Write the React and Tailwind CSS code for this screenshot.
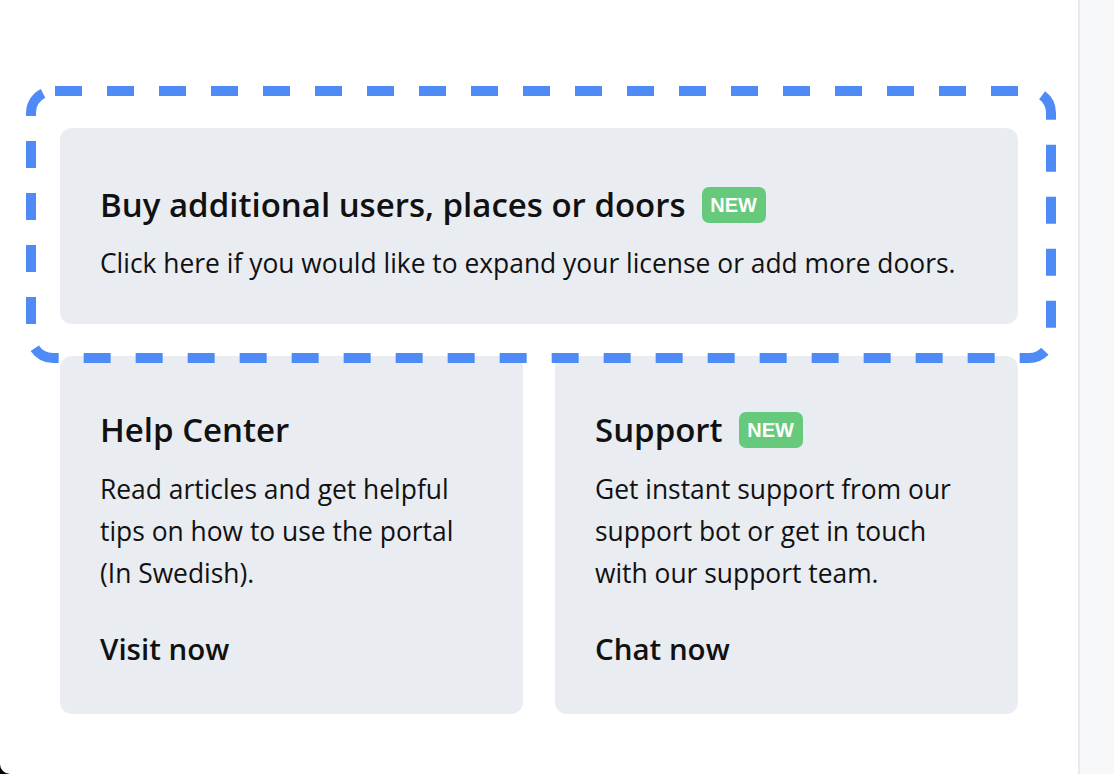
export default function App() {
  return (
    <div className="bg-black w-[1114px] h-[774px] overflow-hidden" style={{ fontFamily: "'Open Sans', Lato, sans-serif" }}>
      <div className="flex h-full bg-white rounded-bl-[10px] overflow-hidden">
        <main className="relative w-[1078px] px-[60px] pt-[128px] text-[#111]">
          {/* dashed highlight drawn over the first card */}
          <svg className="absolute left-0 top-0 pointer-events-none" width="1078" height="400">
            <rect
              x="31"
              y="91"
              width="1020"
              height="267"
              rx="22"
              fill="none"
              stroke="#4f8bf7"
              strokeWidth="10"
              strokeDasharray="27 25"
              strokeDashoffset="-2"
            />
          </svg>

          <div className="h-[196px] bg-[#e9ecf1] rounded-[12px] px-10 pt-[59px]">
            <div className="flex items-center gap-4 h-9">
              <h2 className="text-[33px] font-semibold leading-9">Buy additional users, places or doors</h2>
              <span className="bg-[#66c97b] text-white text-[20px] font-bold rounded-[7px] w-16 h-9 flex items-center justify-center" style={{ fontFamily: "'Liberation Sans', Arial, sans-serif" }}>NEW</span>
            </div>
            <p className="mt-6 text-[26.4px] leading-8">Click here if you would like to expand your license or add more doors.</p>
          </div>

          <div className="grid grid-cols-2 gap-8 mt-8">
            <div className="h-[358px] bg-[#e9ecf1] rounded-[12px] px-10 pt-14">
              <h2 className="text-[33px] font-semibold leading-9 h-9">Help Center</h2>
              <p className="mt-5 text-[26.4px] leading-[42px]">
                Read articles and get helpful<br />tips on how to use the portal<br />(In Swedish).
              </p>
              <div className="mt-[37px] text-[29.5px] font-semibold leading-9">Visit now</div>
            </div>
            <div className="h-[358px] bg-[#e9ecf1] rounded-[12px] px-10 pt-14">
              <div className="flex items-center gap-4 h-9">
                <h2 className="text-[33px] font-semibold leading-9">Support</h2>
                <span className="bg-[#66c97b] text-white text-[20px] font-bold rounded-[7px] w-16 h-9 flex items-center justify-center" style={{ fontFamily: "'Liberation Sans', Arial, sans-serif" }}>NEW</span>
              </div>
              <p className="mt-5 text-[26.4px] leading-[42px]">
                Get instant support from our<br />support bot or get in touch<br />with our support team.
              </p>
              <div className="mt-[37px] text-[29.5px] font-semibold leading-9">Chat now</div>
            </div>
          </div>
        </main>
        <aside className="flex-1 border-l-2 border-[#e8eaee] bg-[#f7f8fa]" />
      </div>
    </div>
  )
}
